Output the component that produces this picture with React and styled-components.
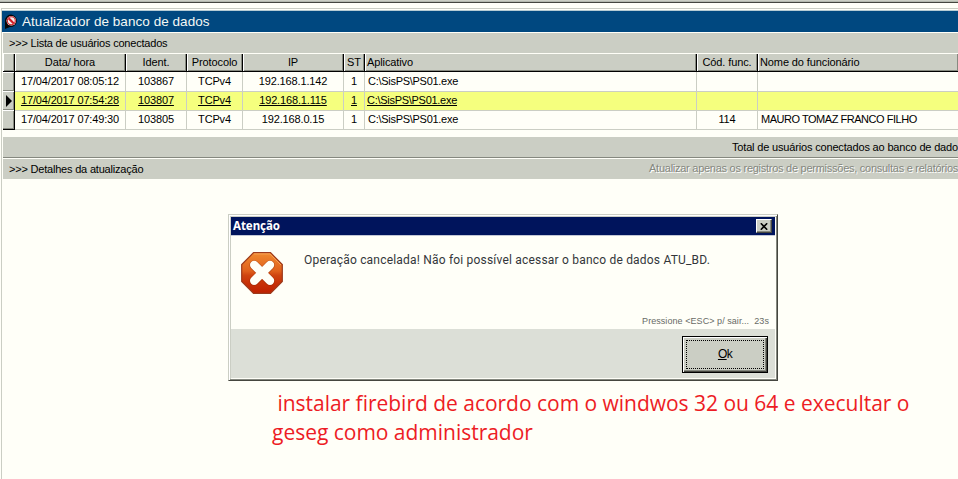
import React from "react";
import styled, { createGlobalStyle, css } from "styled-components";

const face = "#cbcec4";
const paper = "#fffff8";

const Global = createGlobalStyle`
  * { box-sizing: border-box; }
  html, body { margin: 0; background: ${paper}; overflow: hidden; }
  body { font: 11px/13px "Liberation Sans", Arial, sans-serif; color: #000; }
`;

const Screen = styled.div`
  position: relative;
  width: 958px;
  height: 479px;
  overflow: hidden;
  background: ${paper};
  display: flex;
  flex-direction: column;
  white-space: pre;
`;

const TopEdge = styled.div`
  flex: none;
  height: 8px;
  background: linear-gradient(#cbcec4 0 1px, #b4b8ae 1px 2px, #45463f 2px 3px, ${paper} 3px);
`;

const Window = styled.main`
  flex: 1;
  margin-left: 1px;
  border-left: 1px solid ${face};
  border-top: 1px solid ${face};
  display: flex;
  flex-direction: column;
`;

const TitleBar = styled.header`
  flex: none;
  height: 24px;
  border-top: 1px solid ${paper};
  border-bottom: 1px solid ${paper};
  box-shadow: inset 0 1px #b5cbd4;
  background: #004880;
  color: #f4f8f4;
  display: flex;
  align-items: center;
  gap: 4px;
  padding: 1px 0 0 2px;
  font-size: 13.5px;
  line-height: 16px;
  letter-spacing: 0.05px;
`;

const SectionBar = styled.div`
  flex: none;
  height: 20px;
  margin-left: 1px;
  padding: 0 0 0 6px;
  display: flex;
  justify-content: space-between;
  line-height: 20px;
  letter-spacing: -0.2px;
  background: ${face};
`;

const Disabled = styled.span`
  color: #85887f;
  text-shadow: 1px 1px #fff;
  letter-spacing: -0.262px;
  line-height: 18px;
`;

const Grid = styled.div`
  flex: none;
  margin: 0 -1px 8px 1px;
  border-top: 1px solid ${paper};
`;

const columns = css`
  display: grid;
  grid-template-columns: 12px 111px 61px 56px 101px 21px 332px 61px 1fr;
`;

const HeadRow = styled.div`
  ${columns}
  height: 18px;
`;

const HeadCell = styled.div`
  background: ${face};
  border-right: 1px solid #000;
  border-bottom: 1px solid #000;
  box-shadow: inset 1px 0 #fff, inset -1px -1px #878a80;
  text-align: ${(p) => (p.$left ? "left" : "center")};
  padding: 0 1px 0 ${(p) => (p.$left ? 2 : 1)}px;
  line-height: 16px;
  letter-spacing: -0.11px;
`;

const Row = styled.div`
  ${columns}
  height: 19px;
  background: ${(p) => (p.$active ? "#f5ff7e" : paper)};
  text-decoration: ${(p) => (p.$active ? "underline" : "none")};
`;

const Indicator = styled.div`
  background: ${face};
  border-right: 1px solid #000;
  border-bottom: 1px solid #000;
  box-shadow: inset 0 1px #fff, inset -1px -1px #878a80;
  display: flex;
  align-items: center;
  padding-left: 3px;
`;

const Cell = styled.div`
  border-right: 1px solid ${face};
  border-bottom: 1px solid ${face};
  text-align: ${(p) => (p.$left ? "left" : "center")};
  padding-left: ${(p) => (p.$left ? (p.$tight ? 2 : 3) : 0)}px;
  line-height: 19px;
  letter-spacing: ${(p) => p.$track || -0.15}px;
`;

const TotalBar = styled.div`
  flex: none;
  height: 21px;
  margin-left: 1px;
  padding-left: 729px;
  background: ${face};
  border-bottom: 1px solid #85887f;
  margin-bottom: 1px;
  line-height: 20px;
  letter-spacing: -0.17px;
`;

const Dialog = styled.section`
  position: absolute;
  left: 228px;
  top: 214px;
  width: 550px;
  height: 167px;
  border: 1px solid;
  border-color: ${face} #45463f #45463f ${face};
  box-shadow: inset 1px 1px #fff, inset -1px -1px #85887f, inset 2px 2px ${face};
  padding: 2px;
  display: flex;
  flex-direction: column;
`;

const DialogTitle = styled.div`
  flex: none;
  height: 19px;
  background: #00145c;
  border-bottom: 1px solid #c3c8d6;
  color: #fff;
  font: bold 11.5px/18px "Noto Sans", sans-serif;
  letter-spacing: -0.05px;
  display: flex;
  align-items: center;
  justify-content: space-between;
  padding: 0 3px 0 2px;
`;

const CloseButton = styled.button`
  width: 16px;
  height: 14px;
  padding: 0;
  border: 1px solid;
  border-color: #fff #45463f #45463f #fff;
  box-shadow: inset -1px -1px #85887f;
  background: ${face};
  display: grid;
  place-items: center;
`;

const DialogBody = styled.div`
  height: 93px;
  flex: none;
  background: ${paper};
  display: grid;
  grid-template: 76px 1fr / 73px 1fr;
`;

const IconSlot = styled.div`
  padding: 16px 0 0 10px;
`;

const Message = styled.p`
  margin: 0;
  padding-top: 17px;
  font: 12px/15px Roboto, sans-serif;
  letter-spacing: 0.198px;
  color: #33363a;
`;

const Hint = styled.p`
  grid-column: 1 / -1;
  margin: 0;
  padding: 3px 6px 0 0;
  text-align: right;
  font-size: 9px;
  line-height: 12px;
  letter-spacing: 0.06px;
  color: #686b66;
`;

const DialogFooter = styled.div`
  flex: 1;
  background: #dcdfd7;
  display: flex;
  justify-content: flex-end;
  padding: 7px 7px 5px 0;
`;

const OkButton = styled.button`
  width: 86px;
  height: 37px;
  padding: 3px;
  border: 1px solid #000;
  background: ${face};
  box-shadow: inset 1px 1px #fff, inset -1px -1px #45463f, inset -2px -2px #85887f;
  font: 12px/15px "Liberation Sans", Arial, sans-serif;
  letter-spacing: -0.6px;
  color: #000;
`;

const FocusRing = styled.span`
  display: grid;
  place-items: center;
  height: 100%;
  border: 1px dotted #000;
`;

const Note = styled.p`
  position: absolute;
  left: 272px;
  top: 389px;
  margin: 0;
  font: 21px/29px "Open Sans", sans-serif;
  letter-spacing: -0.02px;
  color: #ed1c24;
`;

const users = [
  { at: "17/04/2017 08:05:12", id: "103867", ip: "192.168.1.142" },
  { at: "17/04/2017 07:54:28", id: "103807", ip: "192.168.1.115", active: true },
  { at: "17/04/2017 07:49:30", id: "103805", ip: "192.168.0.15", code: "114", name: "MAURO TOMAZ FRANCO FILHO" },
];

function AppLogo() {
  return (
    <svg width="14" height="16" viewBox="0 0 14 16">
      <path d="M7 .5a6.3 6.3 0 1 1-1 12.6L1 15V7A6.3 6.3 0 0 1 7 .5z" fill="#080808" />
      <circle cx="7.3" cy="6.8" r="4.8" fill="#f4eeee" />
      <circle cx="7.3" cy="6.8" r="4" fill="none" stroke="#d02028" strokeWidth="1.1" />
      <path d="M4.6 4.2l5.2 5.4" stroke="#d02028" strokeWidth="2.2" />
    </svg>
  );
}

function ErrorIcon() {
  return (
    <svg width="42" height="42" viewBox="0 0 42 42" display="block">
      <defs>
        <linearGradient id="stop" x2="0" y2="1">
          <stop offset="0" stopColor="#f08a30" />
          <stop offset=".45" stopColor="#e0601c" />
          <stop offset=".56" stopColor="#cf4410" />
          <stop offset=".74" stopColor="#c83208" />
          <stop offset="1" stopColor="#be2000" />
        </linearGradient>
      </defs>
      <path d="M12.5.7h17L41.3 12.5v17L29.5 41.3h-17L.7 29.5v-17z" fill="url(#stop)" stroke="#9c3a1c" strokeWidth="1.2" />
      <path d="M13 1.9h16L40 13" fill="none" stroke="#ffb468" strokeWidth="1" opacity=".7" />
      <path d="M13.2 13.2l15.8 15.8M29 13.2L13.2 29" stroke="#8f2a08" strokeWidth="9.6" strokeLinecap="round" opacity=".5" />
      <path d="M13.2 13l15.8 15.8M29 13L13.2 28.8" stroke="#fffff8" strokeWidth="8.4" strokeLinecap="round" />
    </svg>
  );
}

export default function App() {
  return (
    <Screen>
      <Global />
      <TopEdge />
      <Window>
        <TitleBar><AppLogo />Atualizador de banco de dados</TitleBar>
        <SectionBar>{">>> Lista de usuários conectados"}</SectionBar>
        <Grid>
          <HeadRow>
            <HeadCell />
            <HeadCell>Data/ hora</HeadCell>
            <HeadCell>Ident.</HeadCell>
            <HeadCell>Protocolo</HeadCell>
            <HeadCell>IP</HeadCell>
            <HeadCell>ST</HeadCell>
            <HeadCell $left>Aplicativo</HeadCell>
            <HeadCell>Cód. func.</HeadCell>
            <HeadCell $left>Nome do funcionário</HeadCell>
          </HeadRow>
          {users.map((u) => (
            <Row key={u.id} $active={u.active}>
              <Indicator>
                {u.active && <svg width="7" height="12" viewBox="0 0 7 12"><path d="M0 0l6 6-6 6z" /></svg>}
              </Indicator>
              <Cell>{u.at}</Cell>
              <Cell>{u.id}</Cell>
              <Cell>TCPv4</Cell>
              <Cell>{u.ip}</Cell>
              <Cell>1</Cell>
              <Cell $left $tight={u.active} $track={-0.28}>{"C:\\SisPS\\PS01.exe"}</Cell>
              <Cell>{u.code}</Cell>
              <Cell $left $track={-0.47}>{u.name}</Cell>
            </Row>
          ))}
        </Grid>
        <TotalBar>Total de usuários conectados ao banco de dado</TotalBar>
        <SectionBar>
          <span>{">>> Detalhes da atualização"}</span>
          <Disabled>Atualizar apenas os registros de permissões, consultas e relatórios</Disabled>
        </SectionBar>
      </Window>
      <Dialog>
        <DialogTitle>
          Atenção
          <CloseButton>
            <svg width="8" height="7" viewBox="0 0 8 7"><path d="M.8.3l6.4 6.4M7.2.3L.8 6.7" stroke="#000" strokeWidth="1.6" /></svg>
          </CloseButton>
        </DialogTitle>
        <DialogBody>
          <IconSlot><ErrorIcon /></IconSlot>
          <Message>Operação cancelada! Não foi possível acessar o banco de dados ATU_BD.</Message>
          <Hint>{"Pressione <ESC> p/ sair...  23s"}</Hint>
        </DialogBody>
        <DialogFooter>
          <OkButton><FocusRing><span><u>O</u>k</span></FocusRing></OkButton>
        </DialogFooter>
      </Dialog>
      <Note>{" instalar firebird de acordo com o windwos 32 ou 64 e execultar o\ngeseg como administrador"}</Note>
    </Screen>
  );
}
